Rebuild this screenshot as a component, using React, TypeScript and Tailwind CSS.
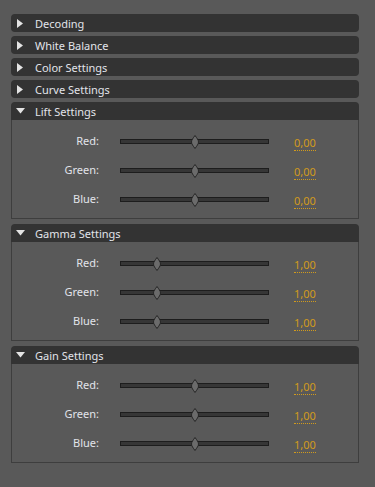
import React from 'react'

interface Channel {
  label: string
  value: string
  pos: number
}

interface Section {
  title: string
  open: boolean
  channels?: Channel[]
}

const sections: Section[] = [
  { title: 'Decoding', open: false },
  { title: 'White Balance', open: false },
  { title: 'Color Settings', open: false },
  { title: 'Curve Settings', open: false },
  {
    title: 'Lift Settings',
    open: true,
    channels: [
      { label: 'Red:', value: '0,00', pos: 50 },
      { label: 'Green:', value: '0,00', pos: 50 },
      { label: 'Blue:', value: '0,00', pos: 50 },
    ],
  },
  {
    title: 'Gamma Settings',
    open: true,
    channels: [
      { label: 'Red:', value: '1,00', pos: 25 },
      { label: 'Green:', value: '1,00', pos: 25 },
      { label: 'Blue:', value: '1,00', pos: 25 },
    ],
  },
  {
    title: 'Gain Settings',
    open: true,
    channels: [
      { label: 'Red:', value: '1,00', pos: 50 },
      { label: 'Green:', value: '1,00', pos: 50 },
      { label: 'Blue:', value: '1,00', pos: 50 },
    ],
  },
]

function Arrow({ open }: { open: boolean }) {
  if (open) {
    return (
      <svg width="9" height="6" viewBox="0 0 9 6" className="ml-[5px] mr-[10px]">
        <path d="M0 0 L9 0 L4.5 5.5 Z" fill="#e4e4e4" />
      </svg>
    )
  }
  return (
    <svg width="6" height="9" viewBox="0 0 6 9" className="ml-[6px] mr-[12px]">
      <path d="M0 0 L6 4.5 L0 9 Z" fill="#e4e4e4" />
    </svg>
  )
}

function Slider({ pos }: { pos: number }) {
  return (
    <div className="relative w-[149px] h-[14px] flex items-center">
      <div className="w-full h-[5px] border border-[#1d1d1d] bg-[#363636]" />
      <svg
        width="8"
        height="14"
        viewBox="0 0 8 14"
        className="absolute top-0"
        style={{ left: `calc(${pos}% - 4px)` }}
      >
        <path
          d="M4 0.5 C5.8 3 7.5 5 7.5 7 C7.5 9 5.8 11 4 13.5 C2.2 11 0.5 9 0.5 7 C0.5 5 2.2 3 4 0.5 Z"
          fill="#6b6b6b"
          stroke="#262626"
          strokeWidth="1"
        />
      </svg>
    </div>
  )
}

export default function App() {
  return (
    <div
      className="w-[375px] h-[487px] bg-[#595959] pt-[14px] pl-[11px] overflow-hidden"
      style={{ fontFamily: '"Noto Sans", "DejaVu Sans", sans-serif' }}
    >
      <div className="w-[348px] flex flex-col">
        {sections.map((s) => (
          <div key={s.title} className={s.open ? 'mb-[5px]' : 'mb-[4px]'}>
            <div
              className={`h-[18px] bg-[#333333] flex items-center text-[11px] text-[#e2e4ea] ${
                s.open ? 'rounded-t-[4px]' : 'rounded-[4px]'
              }`}
            >
              <Arrow open={s.open} />
              <span className="leading-none">{s.title}</span>
            </div>
            {s.open && s.channels && (
              <div className="h-[99px] border border-t-0 border-[#3e3e3e] pt-[7px]">
                {s.channels.map((c) => (
                  <div key={c.label} className="h-[29px] flex items-center text-[11px]">
                    <span className="w-[87px] text-right text-[#e2e4ea]">{c.label}</span>
                    <div className="ml-[21px]">
                      <Slider pos={c.pos} />
                    </div>
                    <span className="ml-[25px] mt-[4px] text-[#d29b1c] leading-[14px] border-b border-dotted border-[#d29b1c]">
                      {c.value}
                    </span>
                  </div>
                ))}
              </div>
            )}
          </div>
        ))}
      </div>
    </div>
  )
}
